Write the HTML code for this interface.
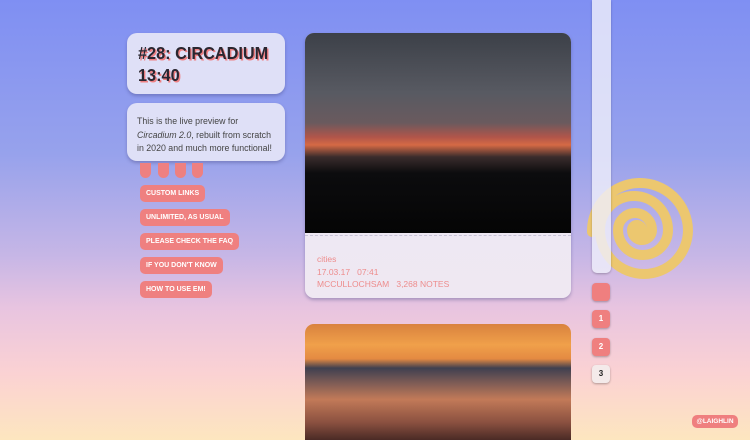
<!DOCTYPE html>
<html style="height:440px;overflow:hidden;background:#fde6bf"><head><style>
*{margin:0;padding:0;box-sizing:border-box}
body{width:750px;height:440px;overflow:hidden;position:relative;font-family:"Liberation Sans",sans-serif;background:linear-gradient(180deg,#7f8ff3 0%,#97a2ec 35%,#c6b6e6 58%,#e8c4e0 70%,#fbd2d3 85%,#fde6bf 100%)}
.box{position:absolute;background:#dfe0f7;border-radius:10px;box-shadow:0 2px 3px rgba(60,60,120,.35)}
h1{position:absolute;left:138px;top:42px;font-size:17.5px;line-height:22px;font-weight:900;color:#2a2630;text-shadow:1.5px 1.5px 0 #ee7f82;transform:scaleX(.93);transform-origin:left}
.desc{position:absolute;left:137px;top:115px;font-size:8.8px;line-height:13.5px;color:#444}
.tab{position:absolute;top:163px;width:11px;height:15px;background:#ee8080;border-radius:0 0 6px 6px}
.btn{position:absolute;left:140px;height:17px;padding:0 6px;background:#ef8080;color:#fff;border-radius:5px;font-size:7px;font-weight:bold;line-height:17px}
.pg{position:absolute;left:592px;width:18px;height:18px;border-radius:4px;background:#ef7f7f;color:#fff;font-size:8px;font-weight:bold;text-align:center;line-height:18px;box-shadow:0 1px 2px rgba(0,0,0,.3)}
</style></head><body>
<div class="box" style="left:127px;top:33px;width:158px;height:61px"></div>
<h1>#28: CIRCADIUM<br>13:40</h1>
<div class="box" style="left:127px;top:103px;width:158px;height:58px"></div>
<div class="desc">This is the live preview for<br><i>Circadium 2.0</i>, rebuilt from scratch<br>in 2020 and much more functional!</div>
<div class="tab" style="left:140px"></div><div class="tab" style="left:158px"></div><div class="tab" style="left:175px"></div><div class="tab" style="left:192px"></div>
<div class="btn" style="top:185px">CUSTOM LINKS</div>
<div class="btn" style="top:209px">UNLIMITED, AS USUAL</div>
<div class="btn" style="top:233px">PLEASE CHECK THE FAQ</div>
<div class="btn" style="top:257px">IF YOU DON'T KNOW</div>
<div class="btn" style="top:281px">HOW TO USE EM!</div>

<div style="position:absolute;left:305px;top:33px;width:266px;height:265px;border-radius:9px;overflow:hidden;background:linear-gradient(#ece7f6,#efe8f2);box-shadow:0 2px 3px rgba(60,60,120,.35)">
 <div style="height:200px;background:linear-gradient(180deg,#3c4048 0%,#585a62 30%,#6a5a5e 45%,#b0554a 52%,#d56a45 56%,#3a2c2c 62%,#0c0c0e 70%,#050505 100%)"></div>
 <div style="border-top:1px dashed #c9c4d8;margin-top:2px"></div>
 <div style="padding:17px 12px 0;font-size:8.5px;line-height:12.5px;color:#ee8c8c">cities<br>17.03.17 &nbsp; 07:41<br>MCCULLOCHSAM &nbsp; 3,268 NOTES</div>
</div>
<div style="position:absolute;left:305px;top:324px;width:266px;height:116px;border-radius:9px 9px 0 0;overflow:hidden;background:linear-gradient(180deg,#d9823e 0%,#f0a04a 18%,#e48a42 30%,#3f4050 38%,#7a5a55 50%,#c27a58 65%,#8a5040 85%,#4a2a25 100%)"></div>

<svg style="position:absolute;left:575px;top:166px" width="125" height="125" viewBox="0 0 125 125">
<path d="M67 64 A5 5 0 0 0 57 64 A10 10 0 0 0 77 64 A17 17 0 0 0 43 64 A25 25 0 0 0 93 64 A34 34 0 0 0 25 64 A44 44 0 0 0 113 64 A48 48 0 0 0 17 66" fill="none" stroke="#ecc76f" stroke-width="10" stroke-linecap="round"/>
</svg>
<div style="position:absolute;left:592px;top:0;width:19px;height:273px;background:rgba(238,238,250,.82);border-radius:0 0 5px 5px;box-shadow:0 1px 2px rgba(0,0,0,.25)"></div>
<div class="pg" style="top:283px"></div>
<div class="pg" style="top:310px">1</div>
<div class="pg" style="top:338px">2</div>
<div class="pg" style="top:365px;background:#f4eaea;color:#222">3</div>
<div style="position:absolute;left:692px;top:415px;width:46px;height:13px;border-radius:5px;background:#ef7f7f;color:#fff;font-size:6.5px;font-weight:bold;text-align:center;line-height:13px">@LAIGHLIN</div>
</body></html>
